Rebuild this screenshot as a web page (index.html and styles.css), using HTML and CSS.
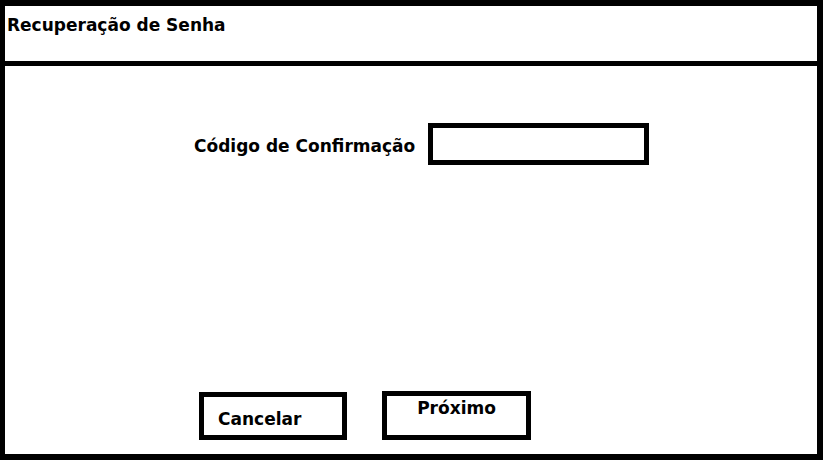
FILE: index.html
```html
<!DOCTYPE html>
<html lang="pt-br">
<head>
    <meta charset="UTF-8">
    <meta name="viewport" content="width=device-width, initial-scale=1.0">
    <title>Recuperação de Senha</title>
    <link rel="stylesheet" href="styles.css">
</head>
<body>
    <div class="window">
        <div class="header">
            <h1>Recuperação de Senha</h1>
        </div>
        <div class="content">
            <div class="field-row">
                <label for="codigo">Código de Confirmação</label>
                <input type="text" id="codigo" name="codigo">
            </div>
            <div class="actions">
                <button type="button" class="btn-cancel">Cancelar</button>
                <button type="button" class="btn-next">Próximo</button>
            </div>
        </div>
    </div>
</body>
</html>
```

FILE: styles.css
```css
/* Estilos gerais */
* {
    box-sizing: border-box;
}
body {
    margin: 0;
    background-color: white;
    font-family: "DejaVu Sans", sans-serif;
    color: #000;
}
.window {
    width: 823px;
    height: 460px;
    border: 6px solid #000;
    border-left-width: 5px;
    display: flex;
    flex-direction: column;
}
.header {
    height: 60px;
    border-bottom: 5px solid #000;
    padding: 9px 0 0 2px;
}
.header h1 {
    margin: 0;
    font-size: 17px;
    font-weight: bold;
    line-height: 20px;
}
.content {
    flex: 1;
    display: flex;
    flex-direction: column;
}
.field-row {
    display: flex;
    align-items: center;
    margin-top: 57px;
    padding-left: 189px;
}
.field-row label {
    font-size: 17px;
    font-weight: bold;
    line-height: 20px;
    margin-right: 13px;
    padding-top: 3px;
    flex-shrink: 0;
}
.field-row input {
    width: 221px;
    height: 42px;
    flex-shrink: 0;
    border: 5px solid #000;
    border-radius: 0;
    font-size: 16px;
    outline: none;
}
.actions {
    margin-top: auto;
    display: flex;
    align-items: flex-end;
    gap: 35px;
    padding: 0 0 14px 194px;
}
.actions button {
    background-color: white;
    border: 5px solid #000;
    border-radius: 0;
    font-family: "DejaVu Sans", sans-serif;
    font-size: 17px;
    font-weight: bold;
    color: #000;
    line-height: 20px;
    cursor: pointer;
}
.btn-cancel {
    width: 148px;
    height: 48px;
    text-align: left;
    padding: 5px 0 0 14px;
}
.btn-next {
    width: 149px;
    height: 49px;
    display: flex;
    justify-content: center;
    align-items: flex-start;
    padding: 2px 0 0 0;
}
```
